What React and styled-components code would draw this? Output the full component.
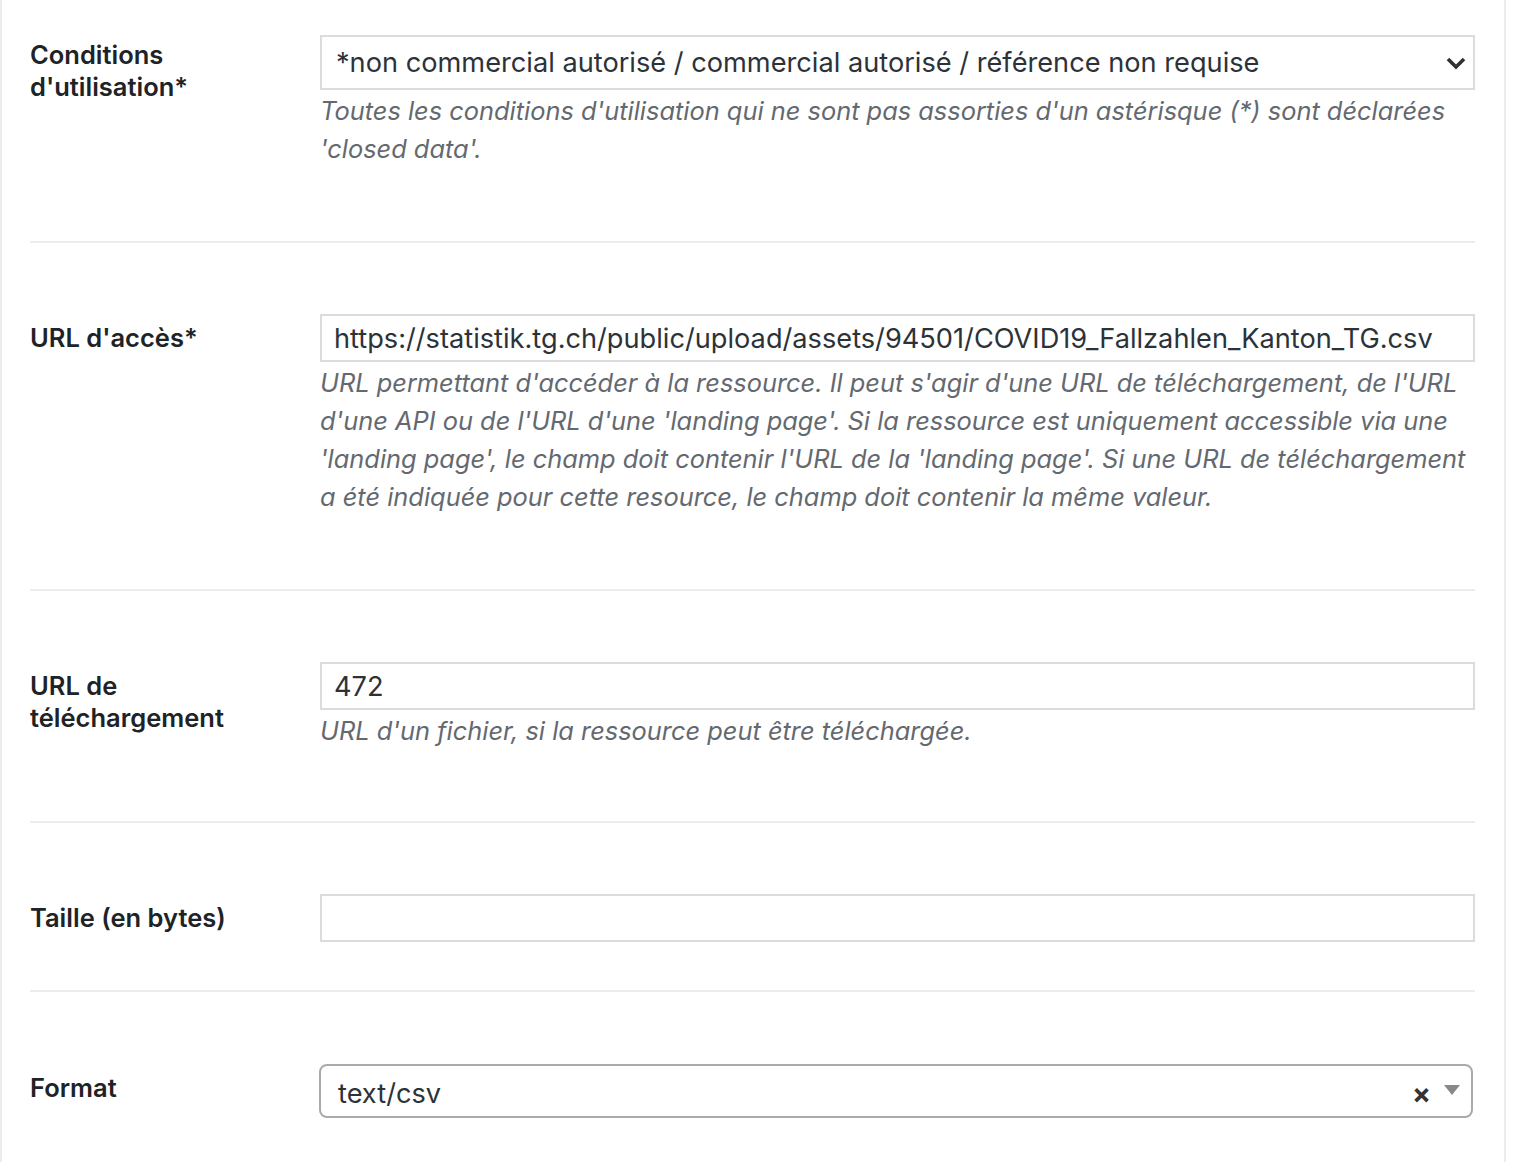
import React from 'react';
import styled, { createGlobalStyle } from 'styled-components';

const GlobalStyle = createGlobalStyle`
    html, body {
        margin: 0;
        padding: 0;
        background: #ffffff;
    }
    body {
        font-family: Inter, "Noto Sans", "Liberation Sans", sans-serif;
        color: #1d2327;
    }
`;

const Page = styled.div`
    width: 1530px;
    height: 1162px;
    overflow: hidden;
    display: flex;
`;

const Box = styled.div`
    width: 1506px;
    flex: none;
    border-left: 2px solid #ececec;
    border-right: 2px solid #ececec;
    padding: 0 29px 0 28px;
    box-sizing: border-box;
`;

const Row = styled.div`
    display: grid;
    grid-template-columns: 290px 1fr;
    padding: ${({ top }) => top}px 0 ${({ bottom }) => bottom}px;
    border-bottom: ${({ last }) => (last ? 'none' : '2px solid #ececec')};
`;

const Label = styled.div`
    font-size: 25.5px;
    font-weight: 600;
    line-height: 32px;
    color: #1d2327;
    padding-top: ${({ offset }) => offset}px;
    padding-right: 40px;
`;

const Field = styled.div`
    display: flex;
    flex-direction: column;
`;

const TextBox = styled.div`
    height: 48px;
    box-sizing: border-box;
    border: 2px solid #dcdcde;
    background: #fff;
    padding: 0 12px;
    display: flex;
    align-items: center;
    font-size: 27.2px;
    color: #2c3338;
    white-space: nowrap;
    overflow: hidden;
`;

const SelectBox = styled(TextBox)`
    height: 55px;
    padding: 0 6px 0 14px;
    justify-content: space-between;
`;

const Chevron = styled.svg`
    flex: none;
    width: 22px;
    height: 14px;
`;

const ComboBox = styled.div`
    height: 54px;
    box-sizing: border-box;
    border: 2px solid #aaaaaa;
    border-radius: 8px;
    background: #fff;
    padding: 0 11px 0 17px;
    margin-left: -1px;
    margin-right: 2px;
    display: flex;
    align-items: center;
    font-size: 27.2px;
    color: #2c3338;
`;

const ComboValue = styled.span`
    flex: 1;
    padding-top: 4px;
`;

const Clear = styled.span`
    font-size: 28px;
    font-weight: 700;
    color: #333;
    margin-right: 13px;
    padding-top: 6px;
`;

const Caret = styled.span`
    width: 0;
    height: 0;
    border-left: 8px solid transparent;
    border-right: 8px solid transparent;
    border-top: 10px solid #888;
    margin-bottom: 2px;
`;

const Hint = styled.p`
    margin: 2px 0 0;
    font-size: 25.4px;
    font-style: italic;
    line-height: 38px;
    color: #646970;
    padding-right: 4px;
`;

const App = () => (
    <>
        <GlobalStyle />
        <Page>
            <Box>
                <Row top={35} bottom={73}>
                    <Label offset={4}>Conditions d'utilisation*</Label>
                    <Field>
                        <SelectBox>
                            *non commercial autorisé / commercial autorisé / référence non requise
                            <Chevron viewBox="0 0 22 14">
                                <path d="M3 3 L11 11 L19 3" fill="none" stroke="#2c3338" strokeWidth="3.6" />
                            </Chevron>
                        </SelectBox>
                        <Hint>
                            Toutes les conditions d'utilisation qui ne sont pas assorties d'un astérisque (*) sont déclarées 'closed data'.
                        </Hint>
                    </Field>
                </Row>
                <Row top={71} bottom={73}>
                    <Label offset={8}>URL d'accès*</Label>
                    <Field>
                        <TextBox>https://statistik.tg.ch/public/upload/assets/94501/COVID19_Fallzahlen_Kanton_TG.csv</TextBox>
                        <Hint>
                            URL permettant d'accéder à la ressource. Il peut s'agir d'une URL de téléchargement, de l'URL d'une API ou de l'URL d'une 'landing page'. Si la ressource est uniquement accessible via une 'landing page', le champ doit contenir l'URL de la 'landing page'. Si une URL de téléchargement a été indiquée pour cette resource, le champ doit contenir la même valeur.
                        </Hint>
                    </Field>
                </Row>
                <Row top={71} bottom={71}>
                    <Label offset={8}>URL de téléchargement</Label>
                    <Field>
                        <TextBox>472</TextBox>
                        <Hint>URL d'un fichier, si la ressource peut être téléchargée.</Hint>
                    </Field>
                </Row>
                <Row top={71} bottom={48}>
                    <Label offset={8}>Taille (en bytes)</Label>
                    <Field>
                        <TextBox />
                    </Field>
                </Row>
                <Row top={72} bottom={40} last>
                    <Label offset={8}>Format</Label>
                    <Field>
                        <ComboBox>
                            <ComboValue>text/csv</ComboValue>
                            <Clear>×</Clear>
                            <Caret />
                        </ComboBox>
                    </Field>
                </Row>
            </Box>
        </Page>
    </>
);

export default App;
